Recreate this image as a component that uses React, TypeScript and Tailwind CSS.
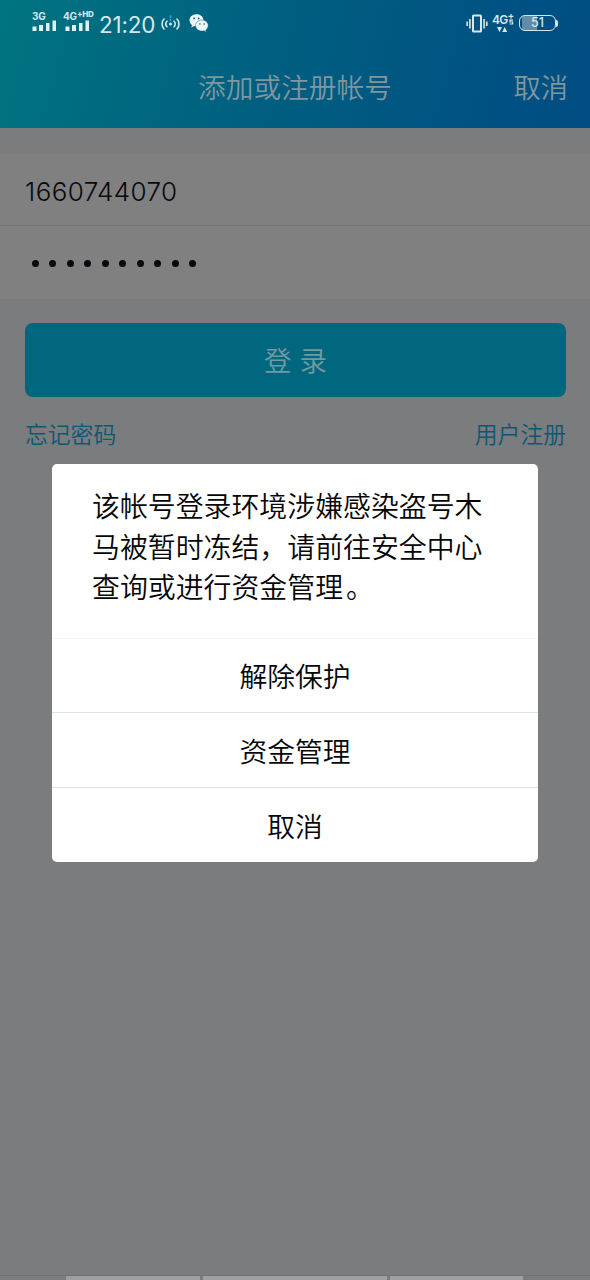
import React from "react";

const dialogActions = ["解除保护", "资金管理", "取消"];

function SignalBars() {
  return (
    <svg width="25" height="11" viewBox="0 0 25 11" fill="#e2f1f5" className="block">
      <rect x="0.5" y="6.5" width="4" height="4.5" />
      <rect x="7" y="5" width="4" height="6" />
      <rect x="14" y="3" width="3.5" height="8" />
      <rect x="20.5" y="0.5" width="3.5" height="10.5" />
    </svg>
  );
}

function Signal({ label, hd }: { label: string; hd?: boolean }) {
  return (
    <div className="flex flex-col">
      <span className="flex h-[9px] items-center whitespace-nowrap text-[10px] leading-[10px] font-bold tracking-[-0.2px]">
        {label}
        {hd && <span className="-mt-[3px] text-[8px] leading-[8px] font-extrabold">+HD</span>}
      </span>
      <div className={hd ? "pl-[2px]" : ""}>
        <SignalBars />
      </div>
    </div>
  );
}

function HotspotIcon() {
  return (
    <svg width="19" height="17" viewBox="0 0 19 17" fill="none" stroke="#d3e8ee" strokeWidth="1.6" strokeLinecap="round" className="block">
      <path d="M3 4C.4 6.6.4 11.4 3 14M6 6.2C4.4 7.8 4.4 10.2 6 11.8M16 4C18.6 6.6 18.6 11.4 16 14M13 6.2C14.6 7.800 14.6 10.2 13 11.8" />
      <circle cx="9.5" cy="9" r="1.5" fill="#d3e8ee" stroke="none" />
      <path d="M9.5 1v1.2M9.5 4.6v.8" stroke="#43a5d6" />
    </svg>
  );
}

function WeChatIcon() {
  return (
    <svg width="20" height="19" viewBox="0 0 20 19" className="block">
      <path d="M7.5.3C3.6.3.5 2.9.5 6.3c0 1.9.9 3.5 2.5 4.6l-.7 2.5 2.8-1.4c.8.2 1.6.3 2.4.3 3.9 0 7-2.6 7-6S11.4.3 7.5.3Z" fill="#edf7f9" />
      <path d="M13 6c-3.6 0-6.4 2.4-6.4 5.6S9.4 17.1 13 17.1c.7 0 1.4-.1 2.1-.3l2.3 1.4-.6-2.3c1.5-1 2.4-2.5 2.4-4.3C19.2 8.4 16.4 6 13 6Z" fill="#edf7f9" stroke="#00648a" strokeWidth=".5" />
      <g fill="#00597f">
        <circle cx="5.2" cy="4.4" r=".9" />
        <circle cx="9.6" cy="4.4" r=".9" />
        <circle cx="10.9" cy="10" r=".8" />
        <circle cx="15.1" cy="10" r=".8" />
      </g>
    </svg>
  );
}

function VibrateIcon() {
  return (
    <svg width="22" height="19" viewBox="0 0 22 19" fill="none" stroke="#d3e8ee" className="block">
      <rect x="7" y="1.5" width="8" height="16" rx=".6" strokeWidth="2" />
      <path d="M1.2 7.5v4.5M3.9 5v9.5M18.1 5v9.5M20.8 7.5v4.5" strokeWidth="1.6" />
    </svg>
  );
}

function MobileDataIcon() {
  return (
    <div className="flex w-[21px] flex-col">
      <div className="flex h-[11px] items-center">
        <span className="text-[12px] leading-[11px] font-semibold tracking-[-0.7px]">4G</span>
        <svg width="6" height="11" viewBox="0 0 6 11" fill="none" stroke="#d3e8ee" strokeWidth="1.2" className="ml-[0.5px] block shrink-0">
          <path d="M3 0v4.8M.5 2.4h5M5 6.2H2v1.8h2.6v2H1.5" />
        </svg>
      </div>
      <svg width="20" height="8" viewBox="0 0 20 8" fill="#d3e8ee" className="block">
        <path d="M5 2h5l-2.5 5ZM10.2 7h5l-2.5-5Z" />
      </svg>
    </div>
  );
}

function Battery() {
  return (
    <div className="flex items-center">
      <div className="flex h-[16px] w-[37px] items-center justify-center rounded-[6px] border-[1.5px] border-[#d3e8ee] bg-[linear-gradient(90deg,transparent_2px,#648ba4_2px,#648ba4_17px,transparent_17px)] text-[12.5px] leading-none font-medium">
        51
      </div>
      <div className="h-[7px] w-[2px] rounded-r-[2px] bg-[#d3e8ee]" />
    </div>
  );
}

function StatusBar() {
  return (
    <div className="flex h-[48px] justify-between px-[32px] font-['Inter','Noto_Sans_CJK_SC',sans-serif] text-[#d3e8ee]">
      <div className="flex">
        <div className="w-[30px] pt-[11px]"><Signal label="3G" /></div>
        <div className="w-[37px] pt-[11px] pl-[1px]"><Signal label="4G" hd /></div>
        <div className="w-[62px] pt-[12px] text-[22.5px] leading-[25px] tracking-[-0.2px]">21:20</div>
        <div className="w-[28px] pt-[15px]"><HotspotIcon /></div>
        <div className="pt-[14px]"><WeChatIcon /></div>
      </div>
      <div className="flex">
        <div className="w-[26px] pt-[14px]"><VibrateIcon /></div>
        <div className="w-[27px] pt-[14px]"><MobileDataIcon /></div>
        <div className="pt-[15px]"><Battery /></div>
      </div>
    </div>
  );
}

function Header() {
  return (
    <header className="h-[128px] bg-[linear-gradient(105deg,#007480_0%,#005d80_50%,#004c83_100%)]">
      <StatusBar />
      <div className="grid h-[80px] grid-cols-[1fr_auto_1fr] items-start px-[22px] pt-[18px] text-[27.7px] leading-[40px] text-[#7f979f]">
        <span />
        <h1 className="font-[350]">添加或注册帐号</h1>
        <span className="text-right text-[27.3px] font-[350]">取消</span>
      </div>
    </header>
  );
}

function LoginForm() {
  return (
    <main>
      <div className="mt-[26px] bg-[#808080]">
        <div className="flex h-[72px] items-center border-b border-[#77787a] pt-[4px] pl-[25px] font-['Inter',sans-serif] text-[26px] font-light tracking-[0.4px] text-[#08090f]">
          1660744070
        </div>
        <div className="flex h-[73px] items-center gap-[10.5px] pt-[2px] pl-[31.5px]">
          {Array.from({ length: 10 }, (_, i) => (
            <span key={i} className="size-[7px] shrink-0 rounded-full bg-[#08090f]" />
          ))}
        </div>
      </div>
      <div className="pt-[24px] pr-[24px] pl-[25px]">
        <div className="flex h-[74px] items-center justify-center rounded-[8px] bg-[#00677f] text-[27.5px] font-[350] text-[#729aa2] [word-spacing:2px]">
          登 录
        </div>
        <div className="flex justify-between pt-[20px] text-[22.8px] leading-[34px] font-[350] text-[#0b5873]">
          <span>忘记密码</span>
          <span>用户注册</span>
        </div>
      </div>
    </main>
  );
}

function Dialog() {
  return (
    <section className="absolute top-[464px] left-[52px] h-[398px] w-[486px] overflow-hidden rounded-[5px] bg-white text-[27.8px] text-[#050505]">
      <p className="h-[174px] pt-[21px] pl-[40px] text-[27.9px] leading-[40.5px] font-[350] whitespace-nowrap">
        该帐号登录环境涉嫌感染盗号木
        <br />
        马被暂时冻结，请前往安全中心
        <br />
        查询或进行资金管理<span className="ml-[3px]">。</span>
      </p>
      {dialogActions.map((action, i) => (
        <div
          key={action}
          className={`flex items-center justify-center border-t pt-[1px] font-[350] ${i === 0 ? "h-[74px] border-[#f5f6f8]" : "h-[75px] border-[#dfe5e7]"}`}
        >
          {action}
        </div>
      ))}
    </section>
  );
}

export default function App() {
  return (
    <div className="relative flex h-[1280px] w-[590px] flex-col justify-between overflow-hidden bg-[#7a7c7e] font-['Noto_Sans_CJK_SC',sans-serif]">
      <div>
        <Header />
        <LoginForm />
      </div>
      <div className="flex h-[5px] gap-[3px] border-t border-[#707173] pl-[66px]">
        <div className="h-[4px] w-[134px] bg-[#a0a0a0]" />
        <div className="h-[4px] w-[184px] bg-[#a0a0a0]" />
        <div className="h-[4px] w-[133px] bg-[#a0a0a0]" />
      </div>
      <Dialog />
    </div>
  );
}
